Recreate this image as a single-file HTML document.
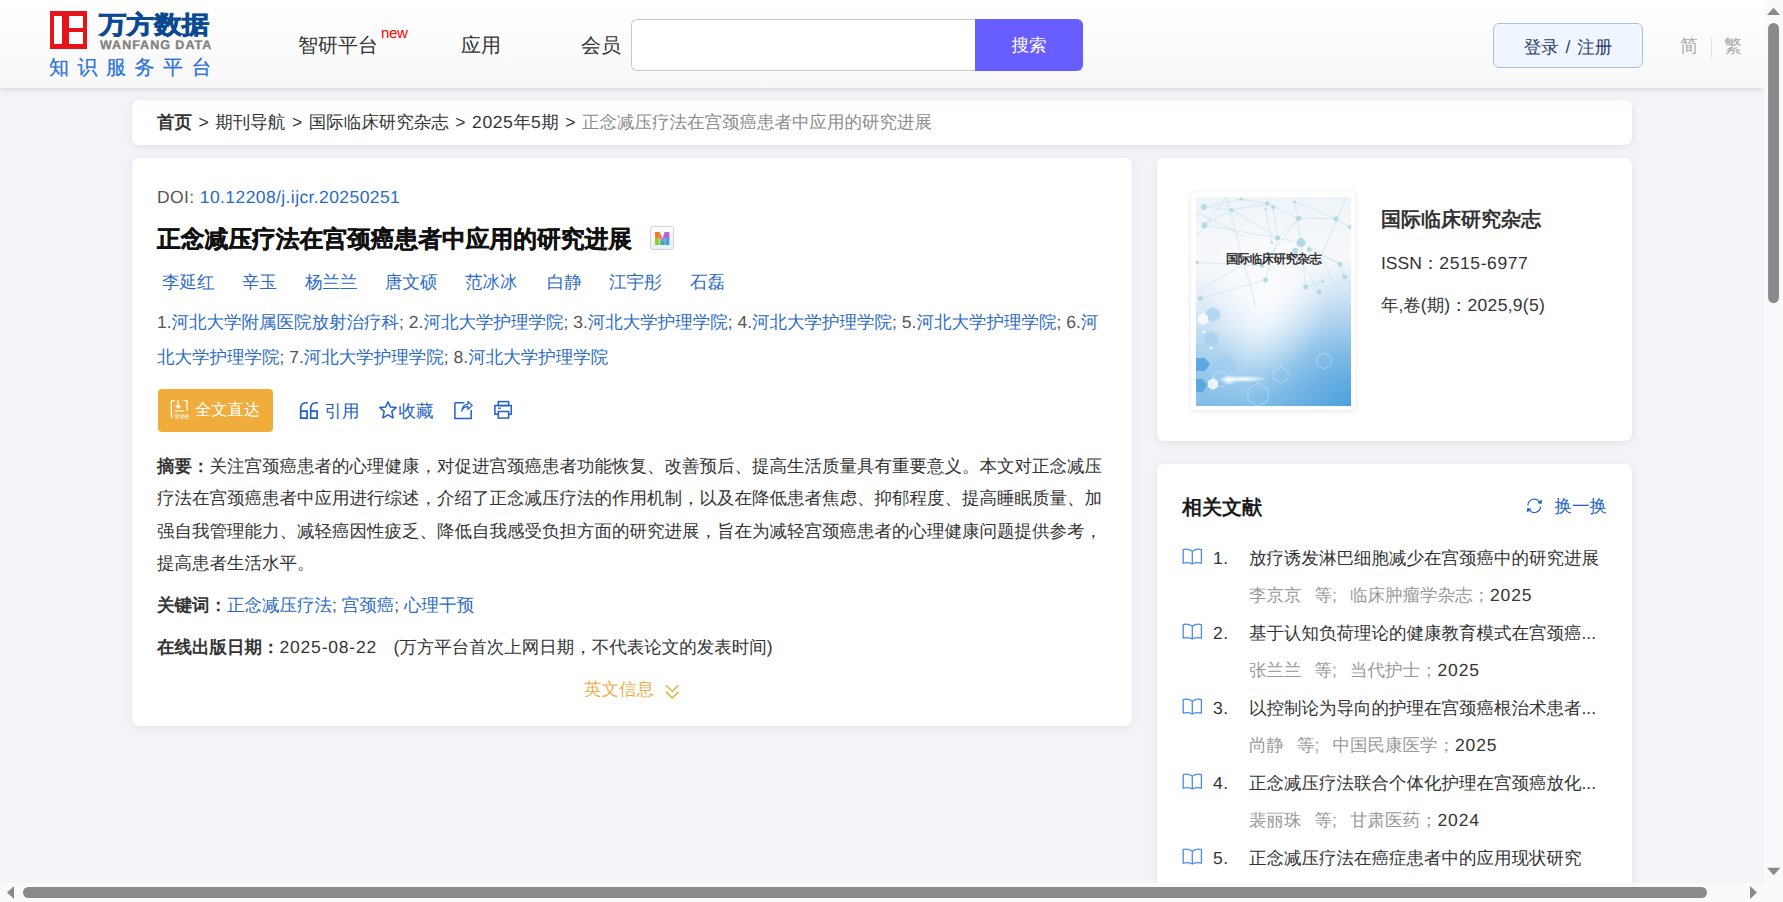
<!DOCTYPE html>
<html><head><meta charset="utf-8">
<style>
*{box-sizing:border-box;margin:0;padding:0}
html,body{width:1783px;height:902px;overflow:hidden}
body{position:relative;text-rendering:geometricPrecision;background:#f2f4f8;font-family:"Liberation Sans",sans-serif;color:#333;font-size:17.5px}
.abs{position:absolute}
#hdr{left:0;top:0;width:1764px;height:88px;background:linear-gradient(#fff,#f8f8f8);box-shadow:0 1px 6px rgba(0,0,0,.14)}
.nav{position:absolute;top:31px;font-size:20px;color:#333;line-height:30px;white-space:nowrap}
.card{position:absolute;background:#fff;border-radius:7px;box-shadow:0 2px 9px rgba(0,0,0,.075)}
.blue{color:#2c6bc4}
.gray{color:#8c8c8c}
.authors span{position:absolute}
.act{color:#2262c6}
/* scrollbars */
#vs{left:1764px;top:0;width:19px;height:883px;background:#fafafa}
#hs{left:0;top:883px;width:1764px;height:19px;background:#fafafa}
#corner{left:1764px;top:883px;width:19px;height:19px;background:#fafafa}
</style></head>
<body>
<div id="hdr" class="abs">
  <!-- logo -->
  <div class="abs" style="left:50px;top:11px;width:37px;height:38px;background:#e5141b"></div>
  <div class="abs" style="left:54px;top:16px;width:8px;height:28px;background:#fff"></div>
  <div class="abs" style="left:69px;top:16px;width:14px;height:12px;background:#fff"></div>
  <div class="abs" style="left:69px;top:32px;width:14px;height:12px;background:#fff"></div>
  <div class="abs" style="left:99px;top:6.5px;font-size:27.5px;line-height:34px;font-weight:900;color:#0b4a92;letter-spacing:0.1px;-webkit-text-stroke:0.8px #0b4a92;white-space:nowrap;transform:scaleY(0.9);transform-origin:0 80%">万方数据</div>
  <div class="abs" style="left:100px;top:39px;font-size:12.5px;line-height:13px;font-weight:bold;color:#808080;letter-spacing:1.0px;white-space:nowrap;-webkit-text-stroke:0.3px #808080">WANFANG DATA</div>
  <div class="abs" style="left:49px;top:55px;font-size:20px;line-height:26px;color:#2a73da;letter-spacing:8.5px;-webkit-text-stroke:0.25px #2a73da;white-space:nowrap">知识服务平台</div>

  <div class="nav" style="left:298px">智研平台</div>
  <div class="abs" style="left:381px;top:25.5px;font-size:15px;color:#f00;line-height:16px;letter-spacing:-0.3px">new</div>
  <div class="nav" style="left:461px">应用</div>
  <div class="nav" style="left:581px">会员</div>

  <div class="abs" style="left:631px;top:19px;width:346px;height:52px;border:1px solid #c8c8c8;border-right:none;border-radius:6px 0 0 6px;background:#fff"></div>
  <div class="abs" style="left:975px;top:19px;width:108px;height:52px;background:#685eff;border-radius:0 6px 6px 0;color:#fff;font-size:17.5px;line-height:52px;text-align:center">搜索</div>

  <div class="abs" style="left:1493px;top:23px;width:150px;height:45px;background:#eff6ff;border:1px solid #a9c3e8;border-radius:6px;color:#2f3d66;font-size:17.5px;line-height:47px;text-align:center;word-spacing:2px">登录 / 注册</div>
  <div class="abs" style="left:1680px;top:31px;font-size:18px;line-height:30px;color:#aaa">简</div>
  <div class="abs" style="left:1711px;top:37px;width:1px;height:21px;background:#e3e3e3"></div>
  <div class="abs" style="left:1724px;top:31px;font-size:18px;line-height:30px;color:#aaa">繁</div>
</div>

<!-- breadcrumb -->
<div class="card" style="left:132px;top:100px;width:1500px;height:45px;padding-left:25px;line-height:45px;white-space:nowrap">
  <span style="word-spacing:1.7px"><b>首页</b> &gt; 期刊导航 &gt; 国际临床研究杂志 &gt; <span style="letter-spacing:.6px">2025</span>年<span style="letter-spacing:.6px">5</span>期 &gt; </span><span class="gray">正念减压疗法在宫颈癌患者中应用的研究进展</span>
</div>

<!-- main card -->
<div class="card" id="main" style="left:132px;top:158px;width:1000px;height:568px"></div>
<div class="abs" id="doi" style="left:157px;top:182px;letter-spacing:0.4px;line-height:30px;font-size:17.5px;color:#555;white-space:nowrap">DOI: <span class="blue">10.12208/j.ijcr.20250251</span></div>
<div class="abs" id="ttl" style="left:157px;top:223.5px;line-height:32px;font-size:23.75px;font-weight:bold;color:#111;-webkit-text-stroke:0.35px #111;white-space:nowrap">正念减压疗法在宫颈癌患者中应用的研究进展</div>
<div class="abs" id="micon" style="left:650px;top:226px;width:24px;height:24px;border:1.5px solid #d2d2d2;border-radius:3px;background:linear-gradient(#fdfdfd,#e9f0f9)"><svg class="abs" style="left:3.9px;top:4.5px" width="15" height="13" viewBox="0 0 15 13">
<rect x="0" y="0" width="4.8" height="6.5" fill="#f77b1c"/><rect x="0" y="6.5" width="4.4" height="6.5" fill="#86cf2e"/>
<polygon points="4.8,0 7.5,6.5 7.5,9.5 4.8,5" fill="#e2705e"/><polygon points="5.2,6 7.5,9.5 9.8,6 9.8,13 5.2,13" fill="#4ea39c"/>
<polygon points="9.6,0 14.4,0 14.4,6 9.8,6 7.5,9.5 7.5,6.5" fill="#b463d6"/><rect x="10.2" y="6" width="4.2" height="7" fill="#41a0ea"/></svg></div>
<div class="abs authors blue" style="top:268px;line-height:28px;white-space:nowrap">
<span style="left:162px">李延红</span><span style="left:242px">辛玉</span><span style="left:305px">杨兰兰</span><span style="left:385px">唐文硕</span><span style="left:465px">范冰冰</span><span style="left:547px">白静</span><span style="left:609px">江宇彤</span><span style="left:690px">石磊</span>
</div>
<div class="abs" id="aff" style="left:157px;top:305px;line-height:35px;color:#555;white-space:nowrap">1.<span class="blue">河北大学附属医院放射治疗科</span>; 2.<span class="blue">河北大学护理学院</span>; 3.<span class="blue">河北大学护理学院</span>; 4.<span class="blue">河北大学护理学院</span>; 5.<span class="blue">河北大学护理学院</span>; 6.<span class="blue">河<br>北大学护理学院</span>; 7.<span class="blue">河北大学护理学院</span>; 8.<span class="blue">河北大学护理学院</span></div>
<div class="abs" id="ftbtn" style="left:158px;top:389px;width:115px;height:43px;background:#f0ad3c;border-radius:4px;color:#fff;font-size:16.25px;line-height:43px;padding-left:37px;white-space:nowrap">全文直达
<svg class="abs" style="left:12px;top:10px" width="22" height="21" viewBox="0 0 22 21" fill="none" stroke="#fff" stroke-width="1.3">
<path d="M5 1.6H2.2Q1.4 1.6 1.4 2.4V17.4Q1.4 18.3 2.2 18.3H3"/><path d="M13.5 1.6H16.2Q17 1.6 17 2.4V12"/>
<path d="M8.2 1.2V8.6M5.6 6.4L8.2 9L10.8 6.4"/><path d="M4.6 12H13.8" stroke-width="1.1"/>
<text x="5" y="20.2" font-size="8.2" font-family="Liberation Sans" fill="#fff" stroke="none" letter-spacing="0.1">free</text></svg></div>
<svg class="abs" style="left:299px;top:401px" width="21" height="19" viewBox="0 0 21 19" fill="none" stroke="#2262c6" stroke-width="1.7">
<path d="M8.8 1.8C4.6 1.4 1.9 2.6 1.7 7V17.1H8.1V10.1H1.7"/><path d="M18.8 1.8C14.6 1.4 11.9 2.6 11.7 7V17.1H18.1V10.1H11.7"/></svg>
<div class="abs act" style="left:324.5px;top:396px;line-height:30px;white-space:nowrap">引用</div>
<svg class="abs" style="left:378px;top:400px" width="20" height="20" viewBox="0 0 20 20" fill="none" stroke="#2262c6" stroke-width="1.5" stroke-linejoin="round">
<path d="M10 1.8L12.4 7.1L18.2 7.6L13.8 11.4L15.1 17.9L10 14.9L4.9 17.9L6.2 11.4L1.8 7.6L7.6 7.1Z"/></svg>
<div class="abs act" style="left:398.5px;top:396px;line-height:30px;white-space:nowrap">收藏</div>
<svg class="abs" style="left:452px;top:399px" width="23" height="22" viewBox="0 0 23 22" fill="none" stroke="#2262c6" stroke-width="1.5">
<path d="M12.5 3.8H3.6Q2.9 3.8 2.9 4.6V19.4H19.2V11"/><path d="M9.8 12.2Q11 7.6 16 7.6V10.4L20.2 6.4L16 2.4V5.2Q10.8 5.6 9.8 12.2Z" stroke-width="1.3" stroke-linejoin="round"/></svg>
<svg class="abs" style="left:493px;top:400px" width="20" height="20" viewBox="0 0 20 20" fill="none" stroke="#2262c6" stroke-width="1.5">
<rect x="5.3" y="1.6" width="10.3" height="4"/><path d="M5 14.3H1.9V5.4H18.2V14.3H15"/><rect x="5.3" y="11.5" width="10.3" height="6.6"/><path d="M5 8.2H8" stroke-width="1.2"/></svg>
<div class="abs" id="abs" style="left:157px;top:450px;width:960px;line-height:32.4px;color:#333;white-space:nowrap"><b>摘要：</b>关注宫颈癌患者的心理健康，对促进宫颈癌患者功能恢复、改善预后、提高生活质量具有重要意义。本文对正念减压<br>疗法在宫颈癌患者中应用进行综述，介绍了正念减压疗法的作用机制，以及在降低患者焦虑、抑郁程度、提高睡眠质量、加<br>强自我管理能力、减轻癌因性疲乏、降低自我感受负担方面的研究进展，旨在为减轻宫颈癌患者的心理健康问题提供参考，<br>提高患者生活水平。</div>
<div class="abs" id="kw" style="left:157px;top:590px;line-height:30px;color:#555;white-space:nowrap"><b style="color:#333">关键词：</b><span class="blue">正念减压疗法</span>; <span class="blue">宫颈癌</span>; <span class="blue">心理干预</span></div>
<div class="abs" id="date" style="left:157px;top:632px;line-height:30px;color:#333;white-space:nowrap"><b>在线出版日期：</b><span style="letter-spacing:0.8px">2025-08-22</span><span style="display:inline-block;width:16.5px"></span>(万方平台首次上网日期，不代表论文的发表时间)</div>
<div class="abs" id="eng" style="left:584px;top:674px;line-height:30px;color:#f0ad4e;white-space:nowrap">英文信息</div>
<svg class="abs" style="left:664px;top:683px" width="17" height="17" viewBox="0 0 17 17" fill="none" stroke="#f0ad3c" stroke-width="1.5">
<path d="M2 2.2L8.3 8.3L14.5 2.2M2 8.9L8.3 15L14.5 8.9"/></svg>

<!-- right cards -->
<div class="card" id="jr" style="left:1157px;top:158px;width:475px;height:283px"></div>
<div class="abs" style="left:1191px;top:192px;width:164px;height:218px;background:#fff;box-shadow:0 1px 6px rgba(0,0,0,.10)"></div>
<svg class="abs" style="left:1196px;top:196.5px" width="155" height="209" viewBox="0 0 155 209">
<defs>
<linearGradient id="cv" x1="0" y1="0" x2="0" y2="1">
<stop offset="0" stop-color="#eef4f8"/><stop offset="0.25" stop-color="#f6f8fb"/><stop offset="0.48" stop-color="#f1f5fb"/><stop offset="0.62" stop-color="#e2eef8"/><stop offset="0.82" stop-color="#b4d8f1"/><stop offset="1" stop-color="#86c0e8"/></linearGradient>
<radialGradient id="cr" cx="100%" cy="100%" r="70%"><stop offset="0" stop-color="#3f98da" stop-opacity="0.8"/><stop offset="1" stop-color="#3f98da" stop-opacity="0"/></radialGradient>
<radialGradient id="cl" cx="0%" cy="80%" r="45%"><stop offset="0" stop-color="#5aa8e0" stop-opacity="0.3"/><stop offset="1" stop-color="#5aa8e0" stop-opacity="0"/></radialGradient>
<radialGradient id="cw" cx="45%" cy="45%" r="40%"><stop offset="0" stop-color="#fff" stop-opacity="0.7"/><stop offset="1" stop-color="#fff" stop-opacity="0"/></radialGradient>
<radialGradient id="gl" cx="50%" cy="50%" r="50%"><stop offset="0" stop-color="#fff" stop-opacity="1"/><stop offset="1" stop-color="#fff" stop-opacity="0"/></radialGradient>
</defs>
<rect width="155" height="209" fill="url(#cv)"/>
<rect width="155" height="209" fill="url(#cr)"/>
<rect width="155" height="209" fill="url(#cl)"/>
<rect width="155" height="209" fill="url(#cw)"/>
<g stroke="#bfdfe6" stroke-width="0.8" fill="none" opacity="0.7"><path d="M7.8 10.1L35.8 13.0M35.8 13.0L71.3 6.6M35.8 13.0L81.7 41.0M8.4 28.2L35.8 13.0M71.3 6.6L102.7 21.2M77.1 10.1L81.7 41.0M102.7 21.2L139.9 21.8M102.7 21.2L81.7 41.0M98.6 4.9L105.0 45.6M81.7 41.0L105.0 45.6M105.0 45.6L144.0 67.2M144.0 67.2L148.7 80.0M105.0 45.6L109.7 89.9M109.7 89.9L126.6 84.6M0.8 65.4L66.0 69.0M66.0 69.0L102.7 21.2M4.3 101.5L69.5 82.9M139.9 21.8L154.0 30.0M139.9 21.8L98.6 4.9M8.4 28.2L81.7 41.0M99.2 53.8L123.1 95.1M113.2 52.6L144.0 67.2M69.5 82.9L81.7 41.0M7.8 10.1L45.0 2.0M45.0 2.0L71.3 6.6M69.5 11.9L75.9 45.6M0 40L30 0M0 95L60 60M150 0L125 60L155 120M30 0L60 110M0 15L50 40"/></g>
<g fill="#a9d4de" opacity="0.8"><circle cx="7.8" cy="10.1" r="3.0"/><circle cx="8.4" cy="28.2" r="3.0"/><circle cx="35.8" cy="13.0" r="2.0"/><circle cx="71.3" cy="6.6" r="2.2"/><circle cx="77.1" cy="10.1" r="2.0"/><circle cx="69.5" cy="11.9" r="1.2"/><circle cx="98.6" cy="4.9" r="1.5"/><circle cx="102.7" cy="21.2" r="2.5"/><circle cx="139.9" cy="21.8" r="2.5"/><circle cx="81.7" cy="41.0" r="2.5"/><circle cx="75.9" cy="45.6" r="1.5"/><circle cx="105.0" cy="45.6" r="4.5"/><circle cx="99.2" cy="53.8" r="3.0"/><circle cx="113.2" cy="52.6" r="2.5"/><circle cx="144.0" cy="67.2" r="2.5"/><circle cx="148.7" cy="80.0" r="2.5"/><circle cx="126.6" cy="84.6" r="1.5"/><circle cx="109.7" cy="89.9" r="2.5"/><circle cx="123.1" cy="95.1" r="2.5"/><circle cx="69.5" cy="82.9" r="2.5"/><circle cx="66.0" cy="69.0" r="2.0"/><circle cx="0.8" cy="65.4" r="2.0"/><circle cx="4.3" cy="101.5" r="2.5"/><circle cx="154.0" cy="30.0" r="2.0"/><circle cx="45.0" cy="2.0" r="1.5"/></g>
<g fill="#4a9ee0" opacity="0.75"><polygon points="0,161 9,161 14,167.5 9,174 0,174"/><polygon points="0,182 7,182 11,188.5 7,195 0,195"/></g>
<g fill="#9fcdf0" opacity="0.6"><polygon points="8,138 15,134 22,138 22,146 15,150 8,146"/><polygon points="10,114 17,110 24,114 24,121 17,125 10,121"/><polygon points="20,164 30,158 40,164 40,176 30,182 20,176"/></g>
<g fill="#ffffff" opacity="0.8"><polygon points="2,119 7,116 12,119 12,125 7,128 2,125"/><polygon points="12,184 17,181 22,184 22,190 17,193 12,190"/><circle cx="15" cy="151" r="1.5"/><circle cx="8" cy="135" r="1.5"/></g>
<g fill="none" stroke="#ffffff" stroke-width="0.7" opacity="0.5"><polygon points="18,178 25,174 32,178 32,186 25,190 18,186"/><polygon points="78,174 85,170 92,174 92,182 85,186 78,182"/><polygon points="121,160 128,156 135,160 135,168 128,172 121,168"/><polygon points="52,192 62,186 72,192 72,204 62,209 52,204"/></g>
<ellipse cx="47" cy="182" rx="26" ry="3.5" fill="url(#gl)"/>
<ellipse cx="33" cy="183" rx="9" ry="5" fill="url(#gl)"/>
<text x="77.5" y="66" text-anchor="middle" font-size="12.5" font-weight="bold" fill="#333" font-family="Liberation Sans, sans-serif" letter-spacing="-0.6">国际临床研究杂志</text>
</svg>
<div class="abs" style="left:1381px;top:204px;font-size:20px;font-weight:bold;color:#333;line-height:32px;white-space:nowrap">国际临床研究杂志</div>
<div class="abs" style="left:1381px;top:248px;color:#333;line-height:30px;white-space:nowrap">ISSN：<span style="letter-spacing:0.6px">2515-6977</span></div>
<div class="abs" style="left:1381px;top:290px;color:#333;line-height:30px;white-space:nowrap">年,卷(期)：<span style="letter-spacing:0.3px">2025,9(5)</span></div>
<div class="card" id="rel" style="left:1157px;top:464px;width:475px;height:440px"></div>
<div class="abs" style="left:1182px;top:491.5px;font-size:20px;font-weight:bold;color:#1a1a1a;line-height:32px;white-space:nowrap">相关文献</div>
<svg class="abs" style="left:1525px;top:497px" width="19" height="18" viewBox="0 0 19 18" fill="none" stroke="#2262c6" stroke-width="1.15">
<path d="M2.9 8.4A6.3 6.3 0 0 1 14.2 4.6"/><path d="M15.6 9.4A6.3 6.3 0 0 1 4.4 13.2"/>
<path d="M16.4 3.2L16.2 6.5L13 5.8Z" fill="#2262c6" stroke-width="0.9"/><path d="M2.4 14.8L2.6 11.5L5.8 12.2Z" fill="#2262c6" stroke-width="0.9"/></svg>
<div class="abs act" style="left:1554.5px;top:490px;line-height:32px;white-space:nowrap">换一换</div>
<svg class="abs" style="left:1182px;top:548px" width="21" height="17" viewBox="0 0 21 17" fill="none" stroke="#4a8de6" stroke-width="1.3" stroke-linejoin="round"><path d="M10.3 3.2Q6 0.2 1.2 1.6V15.2Q6 13.8 10.3 16Q14.6 13.8 19.4 15.2V1.6Q14.6 0.2 10.3 3.2V16"/></svg>
<div class="abs" style="left:1213px;top:543px;line-height:30px;color:#333;letter-spacing:0.6px">1.</div>
<div class="abs" style="left:1249px;top:543px;line-height:30px;color:#333;white-space:nowrap">放疗诱发淋巴细胞减少在宫颈癌中的研究进展</div>
<div class="abs" style="left:1249px;top:580px;line-height:30px;color:#999;white-space:nowrap">李京京<span style="margin-left:13px">等;</span><span style="margin-left:13px">临床肿瘤学杂志</span>；<span style="color:#333;letter-spacing:0.9px">2025</span></div>
<svg class="abs" style="left:1182px;top:623px" width="21" height="17" viewBox="0 0 21 17" fill="none" stroke="#4a8de6" stroke-width="1.3" stroke-linejoin="round"><path d="M10.3 3.2Q6 0.2 1.2 1.6V15.2Q6 13.8 10.3 16Q14.6 13.8 19.4 15.2V1.6Q14.6 0.2 10.3 3.2V16"/></svg>
<div class="abs" style="left:1213px;top:618px;line-height:30px;color:#333;letter-spacing:0.6px">2.</div>
<div class="abs" style="left:1249px;top:618px;line-height:30px;color:#333;white-space:nowrap">基于认知负荷理论的健康教育模式在宫颈癌...</div>
<div class="abs" style="left:1249px;top:655px;line-height:30px;color:#999;white-space:nowrap">张兰兰<span style="margin-left:13px">等;</span><span style="margin-left:13px">当代护士</span>；<span style="color:#333;letter-spacing:0.9px">2025</span></div>
<svg class="abs" style="left:1182px;top:698px" width="21" height="17" viewBox="0 0 21 17" fill="none" stroke="#4a8de6" stroke-width="1.3" stroke-linejoin="round"><path d="M10.3 3.2Q6 0.2 1.2 1.6V15.2Q6 13.8 10.3 16Q14.6 13.8 19.4 15.2V1.6Q14.6 0.2 10.3 3.2V16"/></svg>
<div class="abs" style="left:1213px;top:693px;line-height:30px;color:#333;letter-spacing:0.6px">3.</div>
<div class="abs" style="left:1249px;top:693px;line-height:30px;color:#333;white-space:nowrap">以控制论为导向的护理在宫颈癌根治术患者...</div>
<div class="abs" style="left:1249px;top:730px;line-height:30px;color:#999;white-space:nowrap">尚静<span style="margin-left:13px">等;</span><span style="margin-left:13px">中国民康医学</span>；<span style="color:#333;letter-spacing:0.9px">2025</span></div>
<svg class="abs" style="left:1182px;top:773px" width="21" height="17" viewBox="0 0 21 17" fill="none" stroke="#4a8de6" stroke-width="1.3" stroke-linejoin="round"><path d="M10.3 3.2Q6 0.2 1.2 1.6V15.2Q6 13.8 10.3 16Q14.6 13.8 19.4 15.2V1.6Q14.6 0.2 10.3 3.2V16"/></svg>
<div class="abs" style="left:1213px;top:768px;line-height:30px;color:#333;letter-spacing:0.6px">4.</div>
<div class="abs" style="left:1249px;top:768px;line-height:30px;color:#333;white-space:nowrap">正念减压疗法联合个体化护理在宫颈癌放化...</div>
<div class="abs" style="left:1249px;top:805px;line-height:30px;color:#999;white-space:nowrap">裴丽珠<span style="margin-left:13px">等;</span><span style="margin-left:13px">甘肃医药</span>；<span style="color:#333;letter-spacing:0.9px">2024</span></div>
<svg class="abs" style="left:1182px;top:848px" width="21" height="17" viewBox="0 0 21 17" fill="none" stroke="#4a8de6" stroke-width="1.3" stroke-linejoin="round"><path d="M10.3 3.2Q6 0.2 1.2 1.6V15.2Q6 13.8 10.3 16Q14.6 13.8 19.4 15.2V1.6Q14.6 0.2 10.3 3.2V16"/></svg>
<div class="abs" style="left:1213px;top:843px;line-height:30px;color:#333;letter-spacing:0.6px">5.</div>
<div class="abs" style="left:1249px;top:843px;line-height:30px;color:#333;white-space:nowrap">正念减压疗法在癌症患者中的应用现状研究</div>


<div id="vs" class="abs"></div>
<div id="hs" class="abs"></div>
<div id="corner" class="abs"></div>
<svg class="abs" style="left:1764px;top:0" width="19" height="883" viewBox="0 0 19 883">
<polygon points="3,15 9.5,7.8 16.1,15" fill="#8a8a8a"/>
<rect x="4.1" y="23" width="10.9" height="280" rx="5.45" fill="#8a8a8a"/>
<polygon points="3,867.8 16.4,867.8 9.6,875.3" fill="#8a8a8a"/>
</svg>
<svg class="abs" style="left:0;top:883px" width="1764" height="19" viewBox="0 0 1764 19">
<polygon points="14,2.9 14,16 7,9.5" fill="#8a8a8a"/>
<rect x="23" y="4" width="1684" height="11" rx="5.5" fill="#8a8a8a"/>
<polygon points="1750,2.9 1750,16 1757,9.5" fill="#8a8a8a"/>
</svg>
</body></html>
